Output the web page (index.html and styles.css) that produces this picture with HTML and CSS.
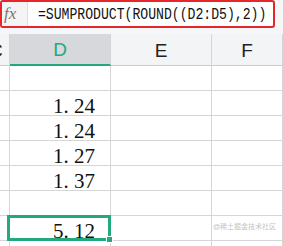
FILE: index.html
```html
<!DOCTYPE html>
<html lang="en">
<head>
    <meta charset="UTF-8">
    <title>SUMPRODUCT</title>
    <link rel="stylesheet" href="styles.css">
</head>
<body>
    <div class="top">
        <div class="formula">
            <div class="fx">fx</div>
            <div class="input"><span class="code">=SUMPRODUCT(ROUND((D2:D5),2))</span></div>
        </div>
    </div>

    <div class="sheet">
        <div class="head">C</div>
        <div class="head active">D</div>
        <div class="head">E</div>
        <div class="head">F</div>

        <div class="cell"></div><div class="cell num"></div><div class="cell"></div><div class="cell"></div>
        <div class="cell"></div><div class="cell num">1<span class="pt">.</span>24</div><div class="cell"></div><div class="cell"></div>
        <div class="cell"></div><div class="cell num">1<span class="pt">.</span>24</div><div class="cell"></div><div class="cell"></div>
        <div class="cell"></div><div class="cell num">1<span class="pt">.</span>27</div><div class="cell"></div><div class="cell"></div>
        <div class="cell"></div><div class="cell num">1<span class="pt">.</span>37</div><div class="cell"></div><div class="cell"></div>
        <div class="cell"></div><div class="cell num"></div><div class="cell"></div><div class="cell"></div>
        <div class="cell"></div><div class="cell num selected">5<span class="pt">.</span>12</div><div class="cell"></div><div class="cell"></div>
        <div class="cell last"></div><div class="cell last"></div><div class="cell last"></div><div class="cell last"></div>
    </div>

    <div class="mark">@稀土掘金技术社区</div>
</body>
</html>
```

FILE: styles.css
```css
*{
    box-sizing:border-box;
}
html{
    overflow:hidden;
}
body{
    margin:0;
    background:#fff;
    font-family:"Liberation Sans", "Noto Sans CJK SC", sans-serif;
    overflow:hidden;
    position:relative;
    height:246px;
}

/* 公式栏 */
.top{
    height:34px;
    background:#f5f6f7;
}
.formula{
    width:275px;
    height:28px;
    border:2px solid #e5262b;
    border-radius:3px;
    display:flex;
    background:#fff;
}
.fx{
    flex:0 0 26px;
    background:#f4f4f5;
    border-right:1px solid #dcdcdc;
    font-family:"Liberation Serif", serif;
    font-style:italic;
    font-size:17px;
    color:#777;
    line-height:24px;
    padding-left:2px;
}
.input{
    flex:1;
    min-width:0;
    overflow:hidden;
    padding-left:10px;
    line-height:24px;
    white-space:nowrap;
}
.code{
    display:inline-block;
    font-family:"Liberation Mono", monospace;
    font-size:16px;
    color:#111;
    transform:scaleX(0.82);
    transform-origin:left center;
}

/* 表格 */
.sheet{
    display:grid;
    grid-template-columns:10px 101px 101px 1fr;
}
.head{
    height:32px;
    background:#f3f4f6;
    border-right:1px solid #d3d5d9;
    border-bottom:1px solid #c9ccd0;
    display:flex;
    justify-content:center;
    align-items:center;
    font-size:19px;
    color:#222;
    padding-top:2px;
}
.head:first-child{
    justify-content:flex-start;
    text-indent:-11px;
    overflow:hidden;
}
.head.active{
    background:#d6d8db;
    color:#23a97c;
    border-bottom:2px solid #23a97c;
}
.cell{
    height:25px;
    border-right:1px solid #d6d6d6;
    border-bottom:1px solid #d6d6d6;
}
.cell.last{
    height:6px;
    border-bottom:none;
}
.num{
    text-align:right;
    padding-right:15px;
    padding-top:2px;
    font-family:"Liberation Serif", serif;
    font-size:21px;
    line-height:27px;
    color:#111;
}
.pt{
    padding-right:0.25em;
}
.selected{
    position:relative;
}
.selected::after{
    content:"";
    position:absolute;
    left:-3px;
    top:-1px;
    right:-1px;
    bottom:-1px;
    border:3px solid #23a97c;
}
.selected::before{
    content:"";
    position:absolute;
    right:-3px;
    bottom:-3px;
    width:5px;
    height:5px;
    background:#23a97c;
    border:1px solid #fff;
    z-index:1;
    box-sizing:content-box;
}

.mark{
    position:absolute;
    right:7px;
    top:221px;
    font-size:7px;
    color:#c4c4c4;
}
```
